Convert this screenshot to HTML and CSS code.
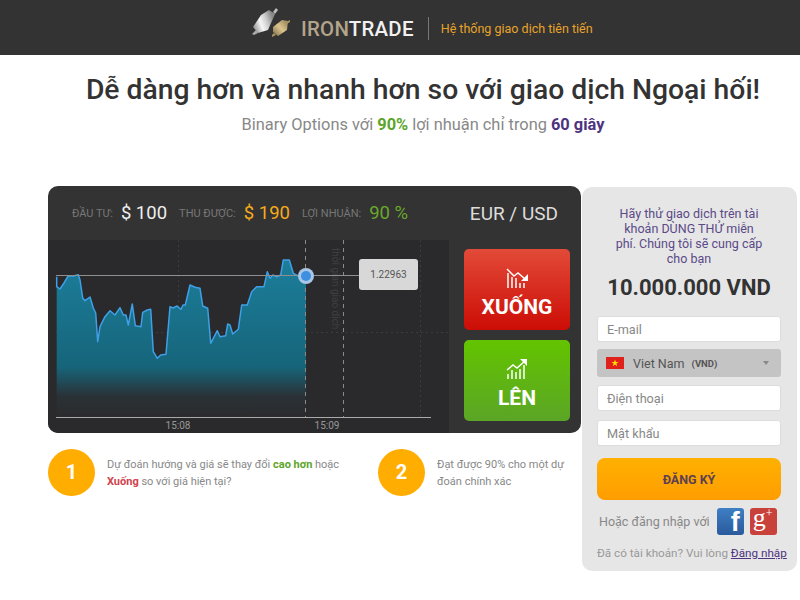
FILE: index.html
```html
<!DOCTYPE html>
<html lang="vi">
<head>
    <meta charset="UTF-8">
    <meta name="viewport" content="width=device-width, initial-scale=1.0">
    <title>IronTrade</title>
    <link rel="stylesheet" href="styles.css">
</head>
<body>
    <!-- Top bar -->
    <header class="topbar">
        <svg class="logo-icon" width="38" height="30" viewBox="0 0 38 30">
            <defs>
                <linearGradient id="silver" x1="0" y1="1" x2="1" y2="0.6">
                    <stop offset="0" stop-color="#777"/>
                    <stop offset="0.45" stop-color="#f6f6f6"/>
                    <stop offset="0.7" stop-color="#cfcfcf"/>
                    <stop offset="1" stop-color="#8a8a8a"/>
                </linearGradient>
                <linearGradient id="gold" x1="0" y1="1" x2="1" y2="0">
                    <stop offset="0" stop-color="#7c6a4a"/>
                    <stop offset="0.5" stop-color="#dcc58e"/>
                    <stop offset="1" stop-color="#8f7c55"/>
                </linearGradient>
            </defs>
            <path d="M4 22L0 26l2 1 4-2z" fill="#aaa"/>
            <path d="M21 4l3-4 2 2-3 4z" fill="#bbb"/>
            <path d="M9 7l8-5 6 4-7 16-10 3-5-6z" fill="url(#silver)"/>
            <path d="M21 19l9-7 6 1-1 9-9 6-5-4z" fill="url(#gold)"/>
            <path d="M34 14l4-2v2l-3 2zM24 27l-4 2v-2l2-2z" fill="#a8935f"/>
        </svg>
        <div class="logo-text"><span class="logo-iron">IRON</span>TRADE</div>
        <div class="slogan">Hệ thống giao dịch tiên tiến</div>
    </header>

    <section class="intro">
        <h1>Dễ dàng hơn và nhanh hơn so với giao dịch Ngoại hối!</h1>
        <p>Binary Options với <b class="green">90%</b> lợi nhuận chỉ trong <b class="purple">60 giây</b></p>
    </section>

    <main class="content">
        <div class="left-col">
            <!-- Trading widget -->
            <div class="trade-card">
                <div class="trade-head">
                    <span class="label">ĐẦU TƯ:</span><span class="value">$ 100</span>
                    <span class="label">THU ĐƯỢC:</span><span class="value yellow">$ 190</span>
                    <span class="label">LỢI NHUẬN:</span><span class="value lime">90 %</span>
                    <span class="pair">EUR / USD</span>
                </div>
                <div class="trade-body">
                    <div class="chart">
                        <svg width="401" height="193" viewBox="0 0 401 193">
                            <defs>
                                <linearGradient id="area" x1="0" y1="0" x2="0" y2="1">
                                    <stop offset="0" stop-color="#1c7e9b"/>
                                    <stop offset="0.68" stop-color="#16657a"/>
                                    <stop offset="0.87" stop-color="#2a3136"/>
                                    <stop offset="1" stop-color="#2b2b2d"/>
                                </linearGradient>
                            </defs>
                            <g class="grid">
                                <line x1="8" y1="92.5" x2="401" y2="92.5"/>
                                <line x1="130.5" y1="0" x2="130.5" y2="177"/>
                                <line x1="372.5" y1="0" x2="372.5" y2="177"/>
                            </g>
                            <path fill="url(#area)" d="M8.7 36.7V46.7L12 49L16 43L20.3 35.7L25.3 36L30.3 34.7L32 40L34.7 58L37 60.7L42 57L45.3 68L47.7 73L49.7 101.7L52 86.7L57 76.7L62 70.7L67 75L72 67.7L75.3 75L78 75L80.3 85L84.3 64L87.3 85.7L93 86.7L94.7 72.3L99.3 70L102.7 69.3L105.3 111.7L109.3 118.3L112.7 115L118 114.3L122 66.7L125 68L129 66L133 69.3L135 65L137.3 65L142 45L147 47.3L152 48.3L154.7 66L159.7 68.3L162.7 103.3L169.3 90.7L172 96.7L177.7 95.7L179.7 84L182 85L184.7 94L190.3 89.3L193.7 65L199.3 65L203.7 51.7L208.7 46.7L216 46.7L219.3 31.7L222 38.3L225 35L228.7 36.7L232.7 35L235.3 20L241.3 20L245.3 33.3L250.3 36L258 36V177H8.7Z"/>
                            <path class="price-line" d="M8.7 36.7V46.7L12 49L16 43L20.3 35.7L25.3 36L30.3 34.7L32 40L34.7 58L37 60.7L42 57L45.3 68L47.7 73L49.7 101.7L52 86.7L57 76.7L62 70.7L67 75L72 67.7L75.3 75L78 75L80.3 85L84.3 64L87.3 85.7L93 86.7L94.7 72.3L99.3 70L102.7 69.3L105.3 111.7L109.3 118.3L112.7 115L118 114.3L122 66.7L125 68L129 66L133 69.3L135 65L137.3 65L142 45L147 47.3L152 48.3L154.7 66L159.7 68.3L162.7 103.3L169.3 90.7L172 96.7L177.7 95.7L179.7 84L182 85L184.7 94L190.3 89.3L193.7 65L199.3 65L203.7 51.7L208.7 46.7L216 46.7L219.3 31.7L222 38.3L225 35L228.7 36.7L232.7 35L235.3 20L241.3 20L245.3 33.3L250.3 36L258 36"/>
                            <line class="level" x1="8" y1="35.5" x2="311" y2="35.5"/>
                            <line class="dash" x1="257.5" y1="0" x2="257.5" y2="177"/>
                            <line class="dash" x1="295.5" y1="0" x2="295.5" y2="177"/>
                            <text class="side-note" transform="translate(284 8) rotate(90)">thời gian giao dịch</text>
                            <line class="axis" x1="8" y1="177.5" x2="383" y2="177.5"/>
                            <circle cx="258" cy="36" r="8" fill="#a9c6e6"/>
                            <circle cx="258" cy="36" r="5" fill="#3d8fe0"/>
                            <text class="time" x="130" y="189" text-anchor="middle">15:08</text>
                            <text class="time" x="279" y="189" text-anchor="middle">15:09</text>
                        </svg>
                        <div class="price-tag">1.22963</div>
                    </div>
                    <div class="actions">
                        <button class="trade-btn down">
                            <svg width="22" height="20" viewBox="0 0 22 20">
                                <path d="M1 1l7 7 4-3 7 6" fill="none" stroke="#fff" stroke-width="1.5"/>
                                <path d="M15 13h7V6z" fill="#fff"/>
                                <path d="M2 5v15M6 9v11M10 10v10M14 15v5M18 15v5" stroke="#fff" stroke-width="1.5"/>
                            </svg>
                            <span>XUỐNG</span>
                        </button>
                        <button class="trade-btn up">
                            <svg width="22" height="20" viewBox="0 0 22 20">
                                <path d="M1 11l6-5 4 3 8-7" fill="none" stroke="#fff" stroke-width="1.5"/>
                                <path d="M14 0h7v7z" fill="#fff"/>
                                <path d="M2 15v5M6 11v9M10 13v7M14 10v10M18 6v14" stroke="#fff" stroke-width="1.5"/>
                            </svg>
                            <span>LÊN</span>
                        </button>
                    </div>
                </div>
            </div>

            <!-- Steps -->
            <div class="steps">
                <div class="step step-one">
                    <div class="step-num">1</div>
                    <p>Dự đoán hướng và giá sẽ thay đổi <b class="green">cao hơn</b> hoặc <b class="red">Xuống</b> so với giá hiện tại?</p>
                </div>
                <div class="step">
                    <div class="step-num">2</div>
                    <p>Đạt được 90% cho một dự đoán chính xác</p>
                </div>
            </div>
        </div>

        <!-- Register form -->
        <aside class="register">
            <p class="promo">Hãy thử giao dịch trên tài khoản DÙNG THỬ miễn phí. Chúng tôi sẽ cung cấp cho bạn</p>
            <div class="amount">10.000.000 VND</div>
            <input class="field" type="text" placeholder="E-mail">
            <div class="country">
                <svg width="18" height="12" viewBox="0 0 18 12">
                    <rect width="18" height="12" fill="#e0201b"/>
                    <path d="M9 2.5l.9 2.5h2.6l-2.1 1.6.8 2.6L9 7.6 6.8 9.2l.8-2.6L5.500 5h2.600z" fill="#ffdc00"/>
                </svg>
                <span class="country-name">Viet Nam</span>
                <span class="country-cur">(VND)</span>
                <span class="caret"></span>
            </div>
            <input class="field" type="text" placeholder="Điện thoại">
            <input class="field" type="password" placeholder="Mật khẩu">
            <button class="submit">ĐĂNG KÝ</button>
            <div class="social">
                <span>Hoặc đăng nhập với</span>
                <div class="soc fb">f</div>
                <div class="soc gp">g<sup>+</sup></div>
            </div>
            <p class="login">Đã có tài khoản? Vui lòng <a href="#">Đăng nhập</a></p>
        </aside>
    </main>
</body>
</html>
```

FILE: styles.css
```css
/* General styles */
body {
    margin: 0;
    background: #fff;
    font-family: Roboto, "Liberation Sans", Arial, sans-serif;
    color: #333;
    overflow: hidden;
}

.green { color: #5da52a; }
.purple { color: #4d3380; }
.red { color: #d2434e; }

/* Top bar */
.topbar {
    height: 55px;
    background: #333;
    display: flex;
    align-items: center;
    padding-left: 252px;
    box-sizing: border-box;
}
.logo-icon {
    margin-top: -9px;
}
.logo-text {
    margin-left: 11px;
    margin-top: 2px;
    font-size: 20.4px;
    font-weight: 500;
    letter-spacing: 0.25px;
    color: #f1f1f1;
}
.logo-iron {
    color: #b3a48c;
}
.slogan {
    margin-left: 14px;
    margin-top: 2px;
    padding-left: 12px;
    height: 23px;
    line-height: 23px;
    border-left: 1px solid #777;
    font-size: 12.5px;
    color: #e8a32a;
}

/* Heading */
.intro {
    padding-left: 46px;
    text-align: center;
    height: 131px;
}
.intro h1 {
    margin: 0;
    padding-top: 17px;
    font-size: 28.3px;
    line-height: 36px;
    font-weight: 500;
    color: #333;
    white-space: nowrap;
}
.intro p {
    margin: 7px 0 0;
    font-size: 16.4px;
    line-height: 20px;
    color: #888;
}
.intro b {
    font-weight: 700;
}

/* Main columns */
.content {
    display: flex;
    align-items: flex-start;
    padding-left: 48px;
}
.left-col {
    width: 533px;
}

/* Trading widget */
.trade-card {
    background: #333;
    border-radius: 10px;
    overflow: hidden;
}
.trade-head {
    height: 54px;
    display: flex;
    align-items: center;
    padding: 0 23px 0 24px;
    box-sizing: border-box;
}
.label {
    font-size: 11px;
    color: #777;
    margin-right: 8px;
}
.value {
    font-size: 18.5px;
    color: #eee;
    margin-right: 12px;
}
.value.yellow { color: #f5ab1c; }
.value.lime { color: #6aa82c; }
.pair {
    margin-left: auto;
    font-size: 19px;
    color: #ddd;
}
.trade-body {
    display: flex;
    height: 193px;
}
.chart {
    position: relative;
    width: 401px;
    background: #2a2a2c;
}
.chart svg {
    display: block;
}
.grid line {
    stroke: #3c3c3c;
    stroke-dasharray: 2 3;
}
.price-line {
    fill: none;
    stroke: #3ea0e6;
    stroke-width: 1.5;
    stroke-linejoin: round;
}
.level {
    stroke: #8f8f8f;
}
.dash {
    stroke: #8a8a8a;
    stroke-dasharray: 4 4;
}
.side-note {
    font-size: 10px;
    fill: #3f3f3f;
}
.axis {
    stroke: #aaa;
}
.time {
    font-size: 10px;
    fill: #999;
}
.price-tag {
    position: absolute;
    left: 311px;
    top: 19px;
    width: 59px;
    height: 31px;
    line-height: 31px;
    background: #d8d8d8;
    border-radius: 3px;
    text-align: center;
    font-size: 10px;
    color: #555;
}
.actions {
    flex: 1;
    display: flex;
    flex-direction: column;
    gap: 10px;
    padding: 9px 11px 0 15px;
}
.trade-btn {
    height: 81px;
    border: none;
    border-radius: 5px;
    color: #fff;
    font-family: inherit;
    font-size: 21px;
    font-weight: 700;
    display: flex;
    flex-direction: column;
    align-items: center;
    padding: 19px 0 0;
}
.trade-btn span {
    line-height: 26px;
}
.trade-btn svg {
    margin-bottom: 6px;
}
.trade-btn.down {
    background: linear-gradient(#e24a38, #cc0d06);
}
.trade-btn.up {
    background: linear-gradient(#63c400, #5ba526);
}

/* Steps */
.steps {
    display: flex;
    padding-top: 16px;
}
.step {
    display: flex;
    align-items: center;
    gap: 12px;
}
.step-one {
    width: 330px;
}
.step-num {
    flex: none;
    width: 47px;
    height: 47px;
    line-height: 47px;
    border-radius: 50%;
    background: #ffad00;
    color: #fff;
    text-align: center;
    font-size: 20px;
    font-weight: 700;
}
.step p {
    margin: 0;
    width: 135px;
    font-size: 11px;
    line-height: 17px;
    color: #888;
}
.step-one p {
    width: 240px;
}

/* Register form */
.register {
    width: 215px;
    margin: 1px 0 0 1px;
    height: 384px;
    box-sizing: border-box;
    background: #e6e6e6;
    border-radius: 10px;
    padding: 19px 16px 0 15px;
    display: flex;
    flex-direction: column;
}
.promo {
    margin: 0;
    padding: 0 17px;
    text-align: center;
    font-size: 12.5px;
    line-height: 15px;
    color: #5a4a86;
}
.amount {
    margin-top: 9px;
    text-align: center;
    font-size: 22px;
    line-height: 26px;
    font-weight: 700;
    color: #333;
    white-space: nowrap;
}
.field {
    box-sizing: border-box;
    width: 184px;
    height: 26px;
    border: 1px solid #ddd;
    border-radius: 3px;
    padding: 0 9px;
    background: #fff;
    font-family: inherit;
    font-size: 12.7px;
    outline: none;
}
.field::placeholder {
    color: #888;
    opacity: 1;
}
.amount + .field {
    margin-top: 15px;
}
.country {
    display: flex;
    align-items: center;
    box-sizing: border-box;
    width: 184px;
    height: 28px;
    margin: 7px 0 8px;
    padding: 0 9px;
    background: #c4c4c4;
    border-radius: 3px;
    color: #555;
}
.country-name {
    margin-left: 9px;
    font-size: 12.5px;
}
.country-cur {
    margin-left: 7px;
    font-size: 9.5px;
    font-weight: 700;
}
.caret {
    margin-left: auto;
    margin-right: 3px;
    border: 3px solid transparent;
    border-top: 4px solid #888;
    border-bottom: 0;
}
.field + .field {
    margin-top: 9px;
}
.submit {
    width: 184px;
    height: 42px;
    margin-top: 12px;
    border: none;
    border-radius: 8px;
    background: linear-gradient(#ffb100, #ff9d00);
    color: #5e3f52;
    font-family: inherit;
    font-size: 12.5px;
    font-weight: 700;
}
.social {
    display: flex;
    align-items: center;
    margin-top: 8px;
    padding-left: 2px;
    font-size: 12.5px;
    color: #888;
}
.soc {
    width: 27px;
    height: 27px;
    border-radius: 3px;
    color: #fff;
    box-sizing: border-box;
}
.fb {
    margin-left: 7px;
    padding-right: 4px;
    background: linear-gradient(#3f7fc4, #2a5a9c);
    font-family: "Liberation Sans", sans-serif;
    font-size: 27px;
    font-weight: 700;
    line-height: 29px;
    text-align: right;
}
.gp {
    margin-left: 6px;
    padding-left: 3px;
    background: #c8413a;
    font-family: "Liberation Serif", serif;
    font-size: 26px;
    line-height: 20px;
}
.gp sup {
    font-size: 12px;
    line-height: 0;
    vertical-align: 9px;
}
.login {
    margin: 11px 0 0;
    font-size: 11.7px;
    color: #999;
    white-space: nowrap;
}
.login a {
    color: #4d3380;
}
```
